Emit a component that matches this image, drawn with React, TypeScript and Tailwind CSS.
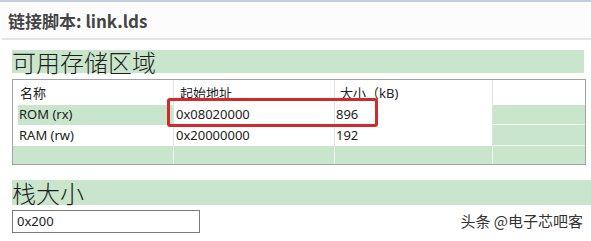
import React from 'react'

const sans = "font-['Noto_Sans','Noto_Sans_CJK_SC',sans-serif]"

interface Row {
    name: string;
    start: string;
    size: string;
    nameBg: string;
}

const rows: Row[] = [
    { name: 'ROM (rx)', start: '0x08020000', size: '896', nameBg: 'bg-[#c9e6cc]' },
    { name: 'RAM (rw)', start: '0x20000000', size: '192', nameBg: 'bg-white' },
]

const App = () => {
    return (
        <div className={`relative w-[591px] h-[241px] overflow-hidden bg-white text-[#222] ${sans}`}>
            {/* 상단 헤더 */}
            <div className="h-[2px] bg-[#c6ced9]" />
            <div className="h-[36px] flex items-center pl-[8px] bg-[#fcfcfc]">
                <span className="text-[17px] font-bold text-[#444] font-['Noto_Sans_CJK_SC',sans-serif] leading-none">链接脚本: link.lds</span>
            </div>
            <div className="h-[2px] ml-[2px] bg-[#e4e4e4]" />

            {/* 메모리 영역 */}
            <div className="mt-[10px] ml-[12px] w-[572px] h-[23px] bg-[#c9e6cc] flex items-center">
                <span className="text-[24px] leading-none text-[#1e1e1e] font-['Noto_Sans_CJK_SC',sans-serif] font-light">可用存储区域</span>
            </div>

            <div className="relative mt-[6px] ml-[12px] w-[574px] h-[86px] border border-[#a3a3a3] text-[13px] text-[#222]">
                <div className="grid grid-cols-[161px_161px_158px_1fr] grid-rows-[25px_20px_21px_1fr] h-full">
                    {/* 헤더 */}
                    <div className="border-r border-[#e2e2e2] pl-[7px] pt-[4px]">名称</div>
                    <div className="border-r border-[#e2e2e2] pl-[6px] pt-[4px]">起始地址</div>
                    <div className="border-r border-[#e2e2e2] pl-[5px] pt-[4px]">大小（kB)</div>
                    <div />
                    {rows.map((row) => (
                        <React.Fragment key={row.name}>
                            <div className="border-r border-[#e2e2e2] pl-[5px] flex">
                                <div className={`flex-1 flex items-center pl-[1px] ${row.nameBg}`}>{row.name}</div>
                            </div>
                            <div className="border-r border-[#e2e2e2] pl-[2px] flex items-center">{row.start}</div>
                            <div className="border-r border-[#e2e2e2] pl-[1px] flex items-center">{row.size}</div>
                            <div className="bg-[#c9e6cc] border-b border-[#eef6ef]" />
                        </React.Fragment>
                    ))}
                    <div className="bg-[#c9e6cc] border-r border-[#eef6ef]" />
                    <div className="bg-[#c9e6cc] border-r border-[#eef6ef]" />
                    <div className="bg-[#c9e6cc] border-r border-[#eef6ef]" />
                    <div className="bg-[#c9e6cc]" />
                </div>
                {/* 빨간 강조 박스 */}
                <div className="absolute left-[154px] top-[18px] w-[211px] h-[29px] border-[3px] border-[#d12a2a] rounded-[3px]" />
            </div>

            {/* 스택 크기 */}
            <div className="mt-[15px] ml-[12px] w-[579px] h-[25px] bg-[#c9e6cc] flex items-center">
                <span className="text-[24px] leading-none text-[#1e1e1e] font-['Noto_Sans_CJK_SC',sans-serif] font-light">栈大小</span>
            </div>
            <div className="mt-[5px] ml-[12px] flex items-center justify-between pr-[8px]">
                <div className="w-[188px] h-[23px] border border-[#7a7a7a] flex items-center pl-[4px] text-[13px]">0x200</div>
                <span className="text-[15px] text-[#333] font-['Noto_Sans_CJK_SC',sans-serif] [text-shadow:0_0_2px_#fff]">头条 @电子芯吧客</span>
            </div>
        </div>
    )
}

export default App
